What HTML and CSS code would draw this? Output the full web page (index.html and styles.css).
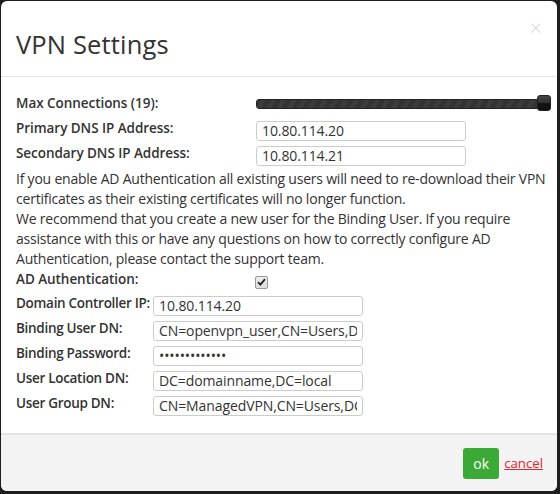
FILE: index.html
```html
<!DOCTYPE html>
<html>
<head>
<meta charset="utf-8">
<link rel="stylesheet" href="styles.css">
</head>
<body>
<div class="modal">
  <div class="modal-header">
    <h2 class="title">VPN Settings</h2>
    <span class="close">×</span>
  </div>
  <div class="modal-body">
    <div class="row wide">
      <label class="lbl">Max Connections (19):</label>
      <div class="slider"><div class="track"></div><div class="handle"></div></div>
    </div>
    <div class="row wide">
      <label class="lbl">Primary DNS IP Address:</label>
      <input class="field" type="text" value="10.80.114.20">
    </div>
    <div class="row wide">
      <label class="lbl">Secondary DNS IP Address:</label>
      <input class="field" type="text" value="10.80.114.21">
    </div>
    <p class="note">If you enable AD Authentication all existing users will need to re-download their VPN certificates as their existing certificates will no longer function.<br>We recommend that you create a new user for the Binding User. If you require assistance with this or have any questions on how to correctly configure AD Authentication, please contact the support team.</p>
    <div class="row wide check-row">
      <label class="lbl">AD Authentication:</label>
      <span class="checkbox"><svg width="9" height="8" viewBox="0 0 9 8"><path d="M1 4.2 L3.4 6.6 L8 1.2" fill="none" stroke="#222" stroke-width="1.8"/></svg></span>
    </div>
    <div class="row narrow">
      <label class="lbl">Domain Controller IP:</label>
      <input class="field" type="text" value="10.80.114.20">
    </div>
    <div class="row narrow">
      <label class="lbl">Binding User DN:</label>
      <input class="field" type="text" value="CN=openvpn_user,CN=Users,DC=domainname,DC=local">
    </div>
    <div class="row narrow">
      <label class="lbl">Binding Password:</label>
      <input class="field pw" type="password" value="abcdefghijklm">
    </div>
    <div class="row narrow">
      <label class="lbl">User Location DN:</label>
      <input class="field" type="text" value="DC=domainname,DC=local">
    </div>
    <div class="row narrow">
      <label class="lbl">User Group DN:</label>
      <input class="field" type="text" value="CN=ManagedVPN,CN=Users,DC=domainname,DC=local">
    </div>
  </div>
  <div class="modal-footer">
    <button class="ok">ok</button>
    <a class="cancel" href="#">cancel</a>
  </div>
</div>
</body>
</html>
```
FILE: styles.css
```css
html, body {
  margin: 0;
  padding: 0;
}
body {
  background: #1e1e1e;
  width: 560px;
  height: 494px;
  padding: 1px 3px 3px 1px;
  box-sizing: border-box;
  font-family: "Open Sans", "Noto Sans", sans-serif;
  color: #333;
}
.modal {
  width: 556px;
  height: 490px;
  background: #fff;
  border-radius: 6px;
  overflow: hidden;
  display: flex;
  flex-direction: column;
}
.modal-header {
  height: 76px;
  border-bottom: 1px solid #e5e5e5;
  display: flex;
  align-items: center;
  justify-content: space-between;
  padding: 10px 15px 0 15px;
  box-sizing: border-box;
  flex: none;
}
.title {
  margin: 0;
  font-size: 25.5px;
  font-weight: 400;
  color: #333;
  letter-spacing: 0.15px;
}
.close {
  font-size: 22px;
  color: #d8d8d8;
  margin-top: -34px;
  margin-right: 0;
  font-weight: 300;
}
.modal-body {
  flex: 1;
  padding: 16px 6px 0 15px;
  font-size: 14px;
  letter-spacing: -0.22px;
}
.row {
  display: grid;
  height: 25px;
  align-items: center;
}
.wide { grid-template-columns: 240px 1fr; }
.narrow { grid-template-columns: 137px 1fr; }
.lbl {
  font-weight: 600;
  font-size: 13.5px;
  color: #333;
  align-self: start;
  line-height: 20px;
  white-space: nowrap;
  letter-spacing: -0.05px;
}
.narrow .lbl { letter-spacing: -0.3px; }
.field {
  width: 210px;
  height: 20px;
  box-sizing: border-box;
  border: 1px solid #ccc;
  border-radius: 3px;
  padding: 0 5px;
  font-family: inherit;
  font-size: 14px;
  letter-spacing: -0.1px;
  color: #333;
  outline: none;
}
.slider {
  position: relative;
  height: 16px;
  width: 295px;
  margin-top: -6px;
}
.track {
  position: absolute;
  left: 0;
  right: 3px;
  top: 4px;
  height: 10px;
  border-radius: 3px;
  background: repeating-linear-gradient(-60deg, #333 0, #333 5px, #3c3c3c 5px, #3c3c3c 9px);
  border: 1px solid #222;
  box-sizing: border-box;
}
.handle {
  position: absolute;
  right: 0;
  top: 0;
  width: 14px;
  height: 16px;
  border-radius: 3px;
  background: linear-gradient(#444 0, #333 45%, #111 55%, #111 100%);
  border: 1px solid #222;
  box-sizing: border-box;
}
.note {
  margin: 0;
  line-height: 20px;
  padding: 1px 0 0 0;
}
.check-row { height: 24px; }
.checkbox {
  width: 11px;
  height: 11px;
  border: 1px solid #999;
  border-radius: 2px;
  background: linear-gradient(#eee, #ddd);
  display: flex;
  align-items: center;
  justify-content: center;
  margin-top: 2px;
  margin-left: -1px;
}
.modal-footer {
  height: 58px;
  flex: none;
  background: #f3f3f3;
  border-top: 2px solid #e5e5e5;
  display: flex;
  align-items: center;
  justify-content: flex-end;
  padding: 0 14px 0 0;
  box-sizing: border-box;
}
.ok {
  width: 36px;
  height: 31px;
  border: none;
  border-radius: 3px;
  background: #3aa935;
  color: #fff;
  font-family: inherit;
  font-size: 14px;
  padding: 0;
}
.cancel {
  color: #e8232a;
  font-size: 13.2px;
  margin-left: 5px;
  text-decoration: underline;
}
```
